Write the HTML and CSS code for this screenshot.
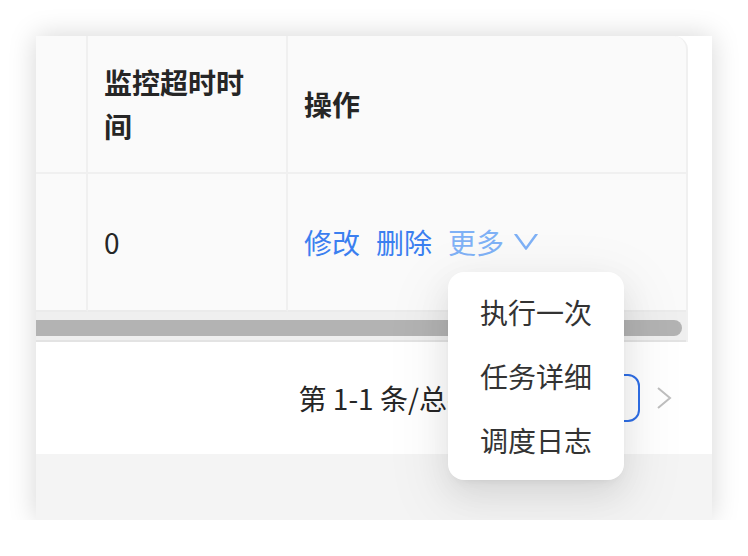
FILE: index.html
```html
<!DOCTYPE html>
<html lang="zh-CN">
<head>
  <meta charset="UTF-8" />
  <meta name="viewport" content="width=device-width, initial-scale=1.0"/>
  <title>任务列表</title>
  <link rel="stylesheet" href="styles.css">
</head>
<body>

  <div class="panel">
    <div class="table-wrap">
      <div class="table">
        <div class="cell head first"></div>
        <div class="cell head">监控超时时间</div>
        <div class="cell head last">操作</div>

        <div class="cell body first"></div>
        <div class="cell body">0</div>
        <div class="cell body last">
          <div class="actions">
            <a class="link">修改</a>
            <a class="link">删除</a>
            <a class="link more">更多
              <svg class="down" viewBox="0 0 1024 1024" width="32" height="32"><path d="M884 256h-75c-5.1 0-9.9 2.5-12.9 6.6L512 654.2 227.9 262.6c-3-4.1-7.8-6.6-12.9-6.6h-75c-6.5 0-10.3 7.4-6.5 12.7l352.6 486.1c12.8 17.6 39 17.6 51.7 0l352.6-486.1c3.9-5.3.1-12.7-6.4-12.7z" fill="currentColor"/></svg>
            </a>
          </div>
        </div>
      </div>
      <div class="scrollbar"><div class="thumb"></div></div>
    </div>

    <div class="pager">
      <span class="total">第 1-1 条/总共 1 条</span>
      <span class="page-btn disabled">
        <svg viewBox="0 0 16 22" width="16" height="22"><polyline points="14,1 2,11 14,21" fill="none" stroke="currentColor" stroke-width="2"/></svg>
      </span>
      <span class="page-btn active">1</span>
      <span class="page-btn disabled">
        <svg viewBox="0 0 16 22" width="16" height="22"><polyline points="2,1 14,11 2,21" fill="none" stroke="currentColor" stroke-width="2"/></svg>
      </span>
    </div>

    <div class="footer"></div>

    <ul class="dropdown">
      <li>执行一次</li>
      <li>任务详细</li>
      <li>调度日志</li>
    </ul>
  </div>

</body>
</html>
```

FILE: styles.css
```css
:root {
  --primary: #3b7ff0;
  --primary-light: #7fb1f6;
  --text-color: #262626;
  --line: #f0f0f0;
  --cell-bg: #fafafa;
}

* {
  box-sizing: border-box;
}

body {
  margin: 0;
  background: #fff;
  font-family: "Noto Sans CJK SC", "Noto Sans", sans-serif;
  color: var(--text-color);
}

.panel {
  position: relative;
  width: 676px;
  height: 484px;
  margin: 36px 0 0 36px;
  padding-right: 24px;
  background: #fff;
  box-shadow: 0 0 26px rgba(0, 0, 0, 0.17);
}

.table-wrap {
  border-top-right-radius: 14px;
  border-right: 2px solid var(--line);
  overflow: hidden;
  background: var(--cell-bg);
}

.table {
  display: grid;
  grid-template-columns: 52px 200px 1fr;
}

.cell {
  display: flex;
  align-items: center;
  padding: 0 16px;
  font-size: 28px;
  line-height: 44px;
  border-right: 2px solid var(--line);
  border-bottom: 2px solid var(--line);
}

.cell.last {
  border-right: none;
}

.cell.head {
  height: 138px;
  font-weight: 600;
}

.cell.body {
  height: 138px;
  border-bottom-color: #ebebeb;
}

.actions {
  display: flex;
  align-items: center;
  gap: 16px;
}

.link {
  display: flex;
  align-items: center;
  color: var(--primary);
  cursor: pointer;
}

.link.more {
  color: var(--primary-light);
}

.down {
  margin-left: 6px;
}

.scrollbar {
  height: 30px;
  padding: 8px 4px 0 0;
  background: #efefef;
  border-bottom: 2px solid #e3e3e3;
}

.thumb {
  height: 16px;
  background: #b3b3b3;
  border-radius: 0 8px 8px 0;
}

.pager {
  display: flex;
  align-items: center;
  justify-content: flex-end;
  height: 112px;
  font-size: 28px;
}

.total {
  margin-right: 13px;
}

.page-btn {
  display: flex;
  align-items: center;
  justify-content: center;
  width: 48px;
  height: 48px;
  border-radius: 12px;
}

.page-btn.disabled {
  color: #bfbfbf;
}

.page-btn.active {
  border: 2px solid #2f6fe8;
  color: #2f6fe8;
  font-size: 26px;
}

.footer {
  height: 66px;
  margin-right: -24px;
  background: #f4f4f4;
}

.dropdown {
  position: absolute;
  left: 412px;
  top: 236px;
  width: 176px;
  margin: 0;
  padding: 8px;
  list-style: none;
  background: #fff;
  border-radius: 16px;
  box-shadow: 0 12px 32px rgba(0, 0, 0, 0.08), 0 6px 12px -8px rgba(0, 0, 0, 0.12), 0 18px 56px 16px rgba(0, 0, 0, 0.05);
}

.dropdown li {
  height: 64px;
  padding: 0 24px;
  font-size: 28px;
  line-height: 64px;
  color: #333;
}
```
